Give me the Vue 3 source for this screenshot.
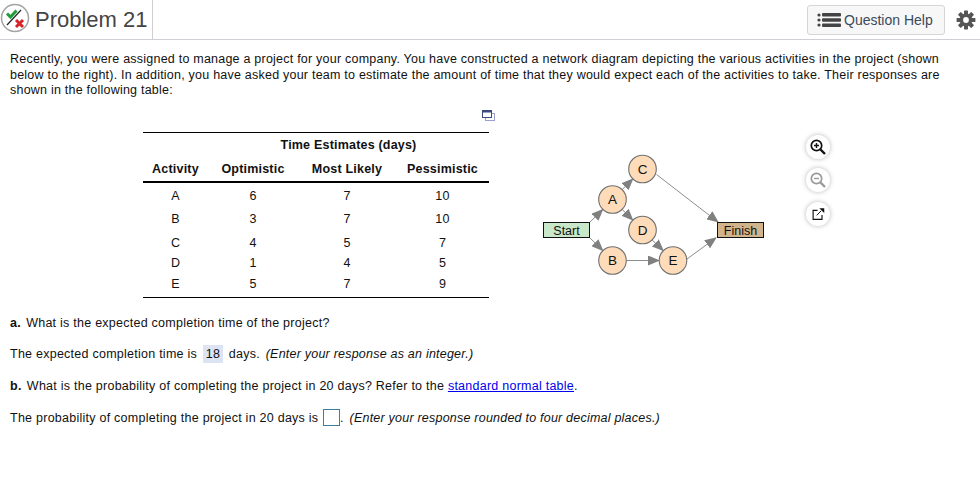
<template>
  <div class="page">
    <header class="top">
      <div class="title-box">
        <svg class="status" width="30" height="30" viewBox="0 0 30 30">
          <circle cx="15" cy="15" r="13.5" fill="#fff" stroke="#a3a3a3" stroke-width="1.5"/>
          <path d="M7 10.5 L10.5 14 L16.5 7.5" fill="none" stroke="#1f9e3a" stroke-width="3"/>
          <path d="M7 22 L21 7" stroke="#222" stroke-width="1.2"/>
          <path d="M16 17 L23 24 M23 17 L16 24" stroke="#d8232a" stroke-width="3"/>
        </svg>
        <span class="title">Problem 21</span>
      </div>
      <div class="spacer"></div>
      <button class="help">
        <svg width="24" height="14" viewBox="0 0 24 14">
          <g fill="#444">
            <circle cx="2" cy="2" r="1.6"/><circle cx="2" cy="7" r="1.6"/><circle cx="2" cy="12" r="1.6"/>
            <rect x="5" y="0" width="19" height="3.6" rx="1"/><rect x="5" y="5.2" width="19" height="3.6" rx="1"/><rect x="5" y="10.4" width="19" height="3.6" rx="1"/>
          </g>
        </svg>
        <span>Question Help</span>
      </button>
      <svg class="gear" width="20" height="20" viewBox="0 0 20 20">
        <g fill="#555">
          <rect v-for="a in [0,45,90,135]" :key="a" x="8" y="0.6" width="4" height="18.8" rx="0.6" :transform="`rotate(${a} 10 10)`"/>
        </g>
        <circle cx="10" cy="10" r="6.4" fill="#555"/>
        <circle cx="10" cy="10" r="2.9" fill="#fff"/>
      </svg>
    </header>

    <main class="body">
      <p class="intro">
        <span>Recently, you were assigned to manage a project for your company. You have constructed a network diagram depicting the various activities in the project (shown</span>
        <span>below to the right). In addition, you have asked your team to estimate the amount of time that they would expect each of the activities to take. Their responses are</span>
        <span>shown in the following table:</span>
      </p>

      <div class="copy-row">
        <svg width="13" height="11" viewBox="0 0 13 11">
          <rect x="3.5" y="3.5" width="9" height="7" fill="#fff" stroke="#9a9fd0"/>
          <rect x="0.5" y="0.5" width="9" height="7" fill="#fff" stroke="#3c4a80"/>
          <rect x="0.5" y="0.5" width="9" height="2" fill="#3c4a80"/>
        </svg>
      </div>

      <div class="figure-row">
        <div class="estimates">
          <div class="group-head">Time Estimates (days)</div>
          <div class="row head">
            <span>Activity</span><span>Optimistic</span><span>Most Likely</span><span>Pessimistic</span>
          </div>
          <div class="rows">
            <div v-for="r in rows" :key="r[0]" class="row data" :style="{ height: r[4] + 'px' }">
              <span>{{ r[0] }}</span><span>{{ r[1] }}</span><span>{{ r[2] }}</span><span>{{ r[3] }}</span>
            </div>
          </div>
        </div>

        <svg class="network" width="226" height="132" viewBox="540 150 226 132">
          <defs>
            <marker id="arrow" markerWidth="12" markerHeight="10" refX="11" refY="5" orient="auto" markerUnits="userSpaceOnUse">
              <path d="M0 0 L12 5 L0 10 Z" fill="#808080"/>
            </marker>
          </defs>
          <g stroke="#8c8c8c" stroke-width="1" fill="none">
            <line v-for="(e, i) in edges" :key="i" :x1="e[0]" :y1="e[1]" :x2="e[2]" :y2="e[3]" marker-end="url(#arrow)"/>
          </g>
          <g class="node-text">
            <rect x="543.5" y="222.5" width="46" height="15" fill="#c9e7c9" stroke="#111"/>
            <text x="566.5" y="234.5">Start</text>
            <rect x="717.5" y="222.5" width="46" height="15" fill="#d2b48c" stroke="#111"/>
            <text x="740.5" y="234.5">Finish</text>
            <g v-for="n in nodes" :key="n[0]">
              <circle :cx="n[1]" :cy="n[2]" r="13.8" fill="#fedcba" stroke="#707070" stroke-width="1.1"/>
              <text class="node-label" :x="n[1]" :y="n[2] + 4.5">{{ n[0] }}</text>
            </g>
          </g>
        </svg>

        <div class="tools">
          <span class="tool">
            <svg width="18" height="18" viewBox="0 0 18 18"><circle cx="7.5" cy="7.5" r="5.2" fill="none" stroke="#111" stroke-width="1.7"/><path d="M11.5 11.5 L16 16" stroke="#111" stroke-width="2.4"/><path d="M5 7.5 H10 M7.5 5 V10" stroke="#111" stroke-width="1.4"/></svg>
          </span>
          <span class="tool">
            <svg width="18" height="18" viewBox="0 0 18 18"><circle cx="7.5" cy="7.5" r="5.2" fill="none" stroke="#9a9a9a" stroke-width="1.7"/><path d="M11.5 11.5 L16 16" stroke="#9a9a9a" stroke-width="2.4"/><path d="M5 7.5 H10" stroke="#9a9a9a" stroke-width="1.4"/></svg>
          </span>
          <span class="tool">
            <svg width="16" height="16" viewBox="0 0 18 18"><path d="M8.5 5 H3.5 V15 H13.5 V10" fill="none" stroke="#111" stroke-width="1.3"/><path d="M7.5 10.5 L12.5 5.5" stroke="#111" stroke-width="1.1"/><path d="M10.5 2.5 H16 V8 Z" fill="#111"/></svg>
          </span>
        </div>
      </div>

      <div class="qa">
        <p><b>a.</b> What is the expected completion time of the project?</p>
        <p>The expected completion time is <span class="answer">18</span> days. <i>(Enter your response as an integer.)</i></p>
        <p><b>b.</b> What is the probability of completing the project in 20 days? Refer to the <a href="#" class="link">standard normal table</a>.</p>
        <p>The probability of completing the project in 20 days is <span class="input"></span>. <i>(Enter your response rounded to four decimal places.)</i></p>
      </div>
    </main>
  </div>
</template>

<script setup>
const rows = [
  ['A', 6, 7, 10, 23],
  ['B', 3, 7, 10, 23],
  ['C', 4, 5, 7, 24],
  ['D', 1, 4, 5, 17],
  ['E', 5, 7, 9, 25]
]
const nodes = [
  ['C', 642.5, 169],
  ['A', 612.5, 199.5],
  ['D', 642.5, 230],
  ['B', 612.5, 260.5],
  ['E', 673, 260.5]
]
const edges = [
  [589.5, 222.5, 602.8, 209.5],
  [589.5, 237.5, 602.8, 250.5],
  [622.2, 189.5, 632.8, 179],
  [622.2, 209.5, 632.8, 220],
  [652.2, 240, 663.2, 250.5],
  [626.5, 260.5, 659, 260.5],
  [656.5, 174.5, 718, 222],
  [687, 259, 716, 237.8]
]
</script>

<style scoped>
.page {
  width: 980px;
  height: 498px;
  overflow: hidden;
  background: #fff;
  color: #111;
  font-family: "Liberation Sans", Arial, sans-serif;
  box-sizing: border-box;
}
.top {
  display: flex;
  align-items: center;
  height: 40px;
  box-sizing: border-box;
  border-bottom: 1px solid #cfcfd6;
  padding-right: 4px;
}
.title-box {
  display: flex;
  align-items: center;
  width: 153px;
  height: 39px;
  box-sizing: border-box;
  border-right: 1px solid #cfcfcf;
}
.status { flex: none; margin-bottom: 3px; }
.title {
  font-size: 22px;
  color: #444;
  margin-left: 5px;
}
.spacer { flex: 1; }
.help {
  display: flex;
  align-items: center;
  gap: 3px;
  width: 138px;
  height: 30px;
  margin-right: 11px;
  padding: 0 0 0 9px;
  border: 1px solid #d5d5d5;
  border-radius: 3px;
  background: #f7f7f7;
  color: #3a4a5a;
  font: 14px "Liberation Sans", Arial, sans-serif;
}
.gear { flex: none; }
.body { padding: 12px 0 0 10px; }
.intro { margin: 0; font-size: 12.5px; line-height: 15.5px; }
.intro span { display: block; white-space: nowrap; letter-spacing: 0.226px; }
.copy-row { display: flex; justify-content: flex-end; width: 485px; height: 22px; padding-top: 11px; }
.figure-row { display: flex; align-items: flex-start; height: 182px; }
.estimates {
  width: 346px;
  margin: 0 0 0 133px;
  border-top: 1px solid #000;
  border-bottom: 1px solid #000;
  font-size: 12.5px;
  letter-spacing: 0.2px;
  text-align: center;
  box-sizing: border-box;
}
.group-head { font-weight: 700; height: 24px; line-height: 24px; padding-left: 65px; }
.row { display: grid; grid-template-columns: 65px 90px 98px 93px; align-items: center; }
.head { font-weight: 700; height: 24px; line-height: 24px; border-bottom: 2px solid #000; }
.rows { padding-top: 2px; }
.network { flex: none; margin: 18px 0 0 51px; }
.node-text text {
  font: 12.5px "Liberation Sans", Arial, sans-serif;
  text-anchor: middle;
  fill: #111;
}
.node-text .node-label { font-size: 13.5px; }
.tools { display: flex; flex-direction: column; gap: 9.5px; margin: 3px 0 0 40px; }
.tool {
  width: 24px;
  height: 24px;
  border-radius: 50%;
  background: #fff;
  box-shadow: 0 0 5px rgba(0, 0, 0, 0.28);
  display: flex;
  align-items: center;
  justify-content: center;
}
.qa { font-size: 12.5px; }
.qa p { margin: 0; height: 32px; line-height: 18px; letter-spacing: 0.25px; white-space: nowrap; }
.qa p:first-child { height: 31px; }
.qa b { margin-right: 1.5px; }
.qa i { letter-spacing: 0.22px; margin-left: 2px; }
.answer {
  display: inline-block;
  background: #dce3f2;
  height: 18px;
  padding: 0 3px;
  margin: 0 2px;
}
.link { color: #0000ee; }
.input {
  display: inline-block;
  width: 15px;
  height: 15px;
  border: 1px solid #3b7f9f;
  vertical-align: -4px;
  margin-left: 1px;
}
</style>
